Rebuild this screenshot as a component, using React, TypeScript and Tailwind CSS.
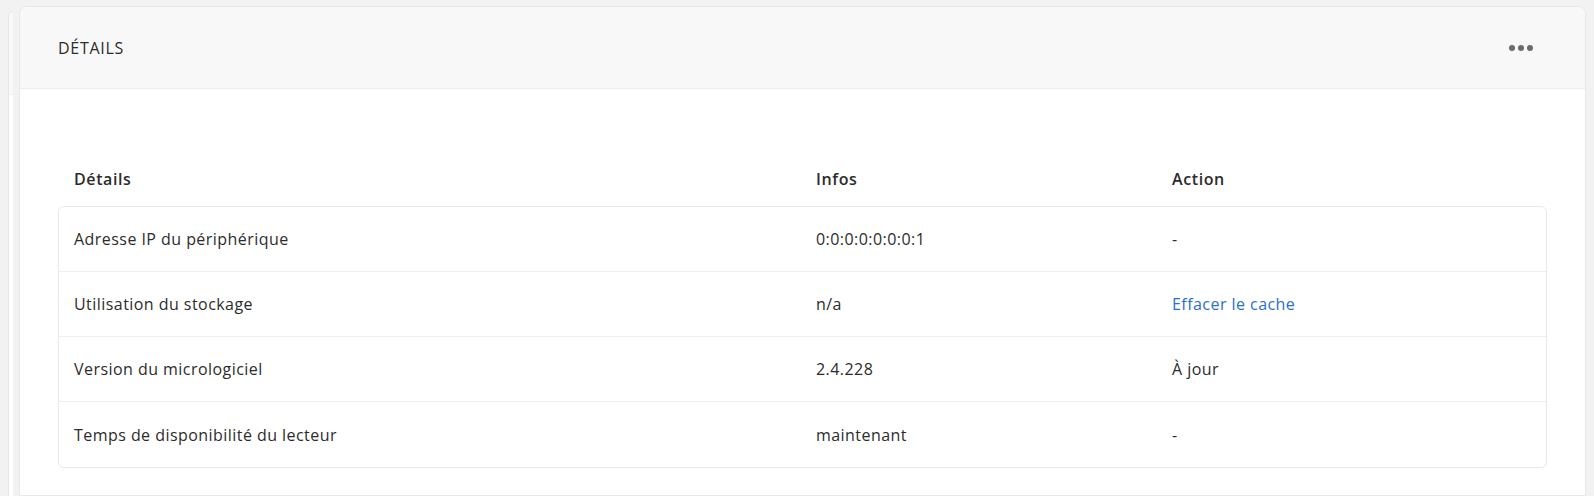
import React from "react";

type Row = {
  label: string;
  info: string;
  action: string;
  link?: boolean;
};

const rows: Row[] = [
  { label: "Adresse IP du périphérique", info: "0:0:0:0:0:0:0:1", action: "-" },
  { label: "Utilisation du stockage", info: "n/a", action: "Effacer le cache", link: true },
  { label: "Version du micrologiciel", info: "2.4.228", action: "À jour" },
  { label: "Temps de disponibilité du lecteur", info: "maintenant", action: "-" },
];

const App: React.FC = () => {
  return (
    <div className="h-[496px] w-full overflow-hidden bg-[#f2f2f2] font-['Open_Sans',sans-serif] text-[16px] tracking-[0.45px] text-[#2c2c2c] flex pt-[6px] pl-[8px] pr-[8px]">
      {/* edge of the neighbouring card */}
      <div className="mt-[5px] w-[5px] shrink-0 flex flex-col rounded-tl-[6px] border-l border-t border-[#e6e6e6] overflow-hidden">
        <div className="h-[83px] bg-[#f8f8f8] border-b border-[#ebebeb]"></div>
        <div className="flex-1 bg-white"></div>
      </div>

      <div className="ml-[6px] flex-1 flex flex-col rounded-t-[8px] border border-[#e8e8e8] bg-white overflow-hidden">
        <div className="h-[82px] shrink-0 bg-[#f8f8f8] border-b border-[#ececec] flex items-center justify-between pl-[38px] pr-[52px]">
          <span className="text-[16px] tracking-[0.7px]">DÉTAILS</span>
          <button className="flex items-center gap-[3px]">
            <span className="w-[6px] h-[6px] rounded-full bg-[#6b6b6b]"></span>
            <span className="w-[6px] h-[6px] rounded-full bg-[#6b6b6b]"></span>
            <span className="w-[6px] h-[6px] rounded-full bg-[#6b6b6b]"></span>
          </button>
        </div>

        <div className="px-[38px] pt-[64px]">
          <div className="grid grid-cols-[742px_356px_1fr] h-[52px] items-center px-[1px] font-semibold tracking-[0.6px]">
            <span className="pl-[15px]">Détails</span>
            <span className="pl-[15px]">Infos</span>
            <span className="pl-[15px]">Action</span>
          </div>

          <div className="mt-[1px] rounded-[6px] border border-[#e8e8e8]">
            {rows.map((row, i) => (
              <div
                key={row.label}
                className={`grid grid-cols-[742px_356px_1fr] h-[65px] items-center ${
                  i < rows.length - 1 ? "border-b border-[#efefef]" : ""
                }`}
              >
                <span className="pl-[15px]">{row.label}</span>
                <span className="pl-[15px]">{row.info}</span>
                <span className={`pl-[15px] ${row.link ? "text-[#2a6fd2]" : ""}`}>
                  {row.action}
                </span>
              </div>
            ))}
          </div>
        </div>
      </div>
    </div>
  );
};

export default App;
